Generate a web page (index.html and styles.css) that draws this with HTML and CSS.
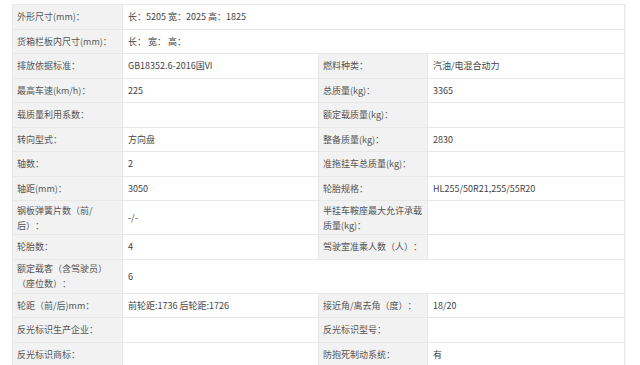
FILE: index.html
```html
<!DOCTYPE html>
<html lang="zh-CN">
<head>
<meta charset="utf-8">
<link rel="stylesheet" href="styles.css">
</head>
<body>
<div class="spec">
  <div class="k">外形尺寸(mm)：</div><div class="v wide">长：5205 宽：2025 高：1825</div>
  <div class="k">货箱栏板内尺寸(mm)：</div><div class="v wide">长： 宽： 高：</div>
  <div class="k">排放依据标准：</div><div class="v">GB18352.6-2016国VI</div><div class="k">燃料种类：</div><div class="v">汽油/电混合动力</div>
  <div class="k">最高车速(km/h)：</div><div class="v">225</div><div class="k">总质量(kg)：</div><div class="v">3365</div>
  <div class="k">载质量利用系数：</div><div class="v"></div><div class="k">额定载质量(kg)：</div><div class="v"></div>
  <div class="k">转向型式：</div><div class="v">方向盘</div><div class="k">整备质量(kg)：</div><div class="v">2830</div>
  <div class="k">轴数：</div><div class="v">2</div><div class="k">准拖挂车总质量(kg)：</div><div class="v"></div>
  <div class="k">轴距(mm)：</div><div class="v">3050</div><div class="k">轮胎规格：</div><div class="v">HL255/50R21,255/55R20</div>
  <div class="k">钢板弹簧片数（前/后）：</div><div class="v">-/-</div><div class="k">半挂车鞍座最大允许承载质量(kg)：</div><div class="v"></div>
  <div class="k">轮胎数：</div><div class="v">4</div><div class="k">驾驶室准乘人数（人）：</div><div class="v"></div>
  <div class="k">额定载客（含驾驶员）（座位数）：</div><div class="v wide">6</div>
  <div class="k">轮距（前/后)mm：</div><div class="v">前轮距:1736 后轮距:1726</div><div class="k">接近角/离去角（度）：</div><div class="v">18/20</div>
  <div class="k">反光标识生产企业：</div><div class="v"></div><div class="k">反光标识型号：</div><div class="v"></div>
  <div class="k">反光标识商标：</div><div class="v"></div><div class="k">防抱死制动系统：</div><div class="v">有</div>
</div>
</body>
</html>
```

FILE: styles.css
```css
html, body {
  margin: 0;
  padding: 0;
  background: #ffffff;
}
body {
  padding: 4px 0 0 12px;
  font-family: "Noto Sans CJK SC", "Microsoft YaHei", sans-serif;
  font-size: 9px;
  line-height: 15px;
  color: #4a4a4a;
  text-spacing-trim: space-all;
}
.spec {
  display: grid;
  grid-template-columns: 109px 195px 108px 196px;
  gap: 1px;
  padding: 1px;
  width: max-content;
  background: #e8e8e8;
  box-shadow: 2px 0 0 -1px #f2f2f2;
}
.k, .v {
  min-height: 23.5px;
  padding: 1.5px 4px;
  box-sizing: border-box;
  display: flex;
  align-items: center;
}
.k {
  background: #f2f2f2;
  color: #555555;
}
.v {
  background: #ffffff;
  color: #444444;
  padding-left: 5px;
}
.wide {
  grid-column: span 3;
}
```
